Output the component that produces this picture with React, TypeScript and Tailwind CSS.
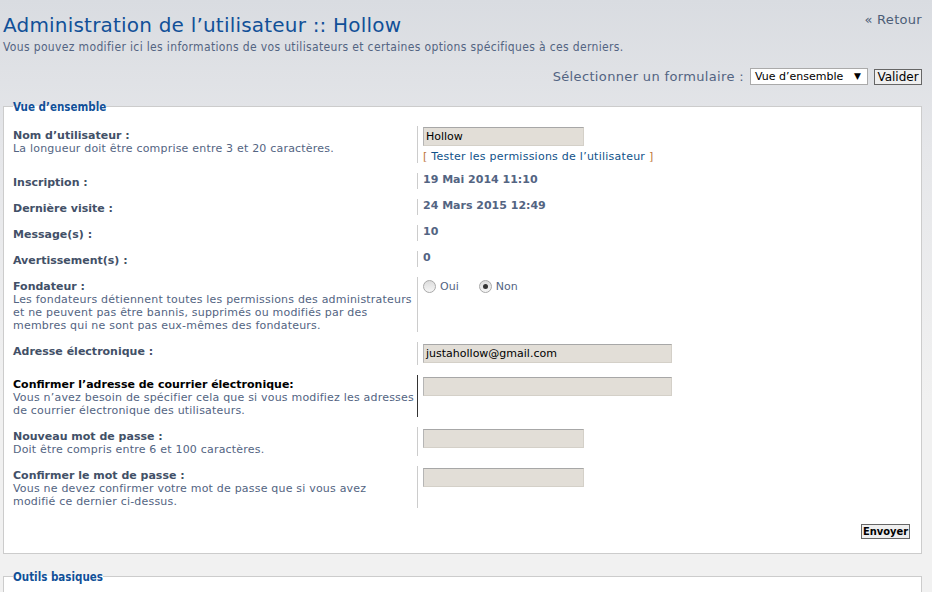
import React from "react";

const V = { fontFamily: '"DejaVu Sans", Verdana, sans-serif' };
const T = { fontFamily: '"DejaVu Sans Condensed", "DejaVu Sans", Tahoma, sans-serif' };

function Row({
  label,
  explain,
  children,
  dark,
  black,
}: {
  label: string;
  explain?: React.ReactNode;
  children?: React.ReactNode;
  dark?: boolean;
  black?: boolean;
}) {
  return (
    <div className="flex mb-[10px]">
      <div className="w-[404px] shrink-0 pt-[3px] text-[11px] leading-[13px] whitespace-nowrap" style={V}>
        <div className={`font-bold text-[11px] leading-[13px] ${black ? "text-black" : "text-[#425067]"}`}>{label}</div>
        {explain && <div className="text-[11px] text-[#536482] tracking-[0.2px]">{explain}</div>}
      </div>
      <div className={`flex-1 border-l pl-[5px] ${dark ? "border-[#333]" : "border-[#ccc]"}`}>{children}</div>
    </div>
  );
}

function Input({ value, w }: { value?: string; w: string }) {
  return (
    <div
      className={`${w} h-[19px] bg-[#e2ded7] border border-t-[#a7a7a7] border-l-[#b5b5b5] border-r-[#d4d0c8] border-b-[#d4d0c8] text-[11px] leading-[17px] px-[2px] text-black`}
      style={V}
    >
      {value}
    </div>
  );
}

function Value({ v }: { v: string }) {
  return (
    <div className="font-bold text-[11px] leading-[13px] text-[#536482]" style={V}>
      {v}
    </div>
  );
}

function Radio({ checked }: { checked?: boolean }) {
  return (
    <span className="inline-flex w-[13px] h-[13px] rounded-full border border-[#a9a9a9] bg-[linear-gradient(to_bottom,#dcdcdc,#f6f6f6)] items-center justify-center">
      {checked && <span className="w-[5px] h-[5px] rounded-full bg-[#333]" />}
    </span>
  );
}

export default function App() {
  return (
    <div className="min-h-[592px] bg-[linear-gradient(to_bottom,#d9dce1_0px,#e6e7ea_150px,#f1f1f1_400px)] pl-[3px] pr-[10px] pt-[12px]" style={V}>
      <div className="flex justify-between items-start">
        <h1 className="text-[20px] leading-[26px] text-[#115098] tracking-[0.2px]" style={V}>
          Administration de l’utilisateur :: Hollow
        </h1>
        <a className="text-[13px] leading-[20px] text-[#4c5d77] mt-[-2px] tracking-[0.3px]" style={V}>« Retour</a>
      </div>
      <p className="text-[12px] leading-[16px] text-[#536482] mt-[1px] tracking-[0.35px]" style={T}>
        Vous pouvez modifier ici les informations de vos utilisateurs et certaines options spécifiques à ces derniers.
      </p>
      <div className="flex justify-end items-center mt-[12px] gap-[6px]">
        <span className="text-[13px] text-[#536482] tracking-[0.35px]" style={V}>Sélectionner un formulaire :</span>
        <div className="w-[118px] h-[17px] bg-white border border-[#aaa] flex items-center justify-between pl-[4px] pr-[6px] text-[11px] text-black" style={V}>
          <span>Vue d’ensemble</span>
          <span className="text-[9px]">▼</span>
        </div>
        <div className="h-[16px] w-[48px] text-center border border-[#666] bg-[#efefef] text-[12px] leading-[14px] text-black" style={V}>Valider</div>
      </div>

      <fieldset className="mt-[13px] border border-[#ccc] bg-white pl-[9px] pr-[11px] pt-[12px] pb-[14px]">
        <legend className="text-[11.5px] font-bold text-[#115098] leading-[14px] px-0" style={T}>Vue d’ensemble</legend>
        <Row label="Nom d’utilisateur :" explain="La longueur doit être comprise entre 3 et 20 caractères.">
          <div className="pt-[1px]">
            <Input value="Hollow" w="w-[161px]" />
            <div className="mt-[4px] text-[11px] leading-[13px] tracking-[0.25px]" style={V}>
              <span className="text-[#c0763a]">[ </span>
              <span className="text-[#105289]">Tester les permissions de l’utilisateur</span>
              <span className="text-[#c0763a]"> ]</span>
            </div>
          </div>
        </Row>
        <Row label="Inscription :"><Value v="19 Mai 2014 11:10" /></Row>
        <Row label="Dernière visite :"><Value v="24 Mars 2015 12:49" /></Row>
        <Row label="Message(s) :"><Value v="10" /></Row>
        <Row label="Avertissement(s) :"><Value v="0" /></Row>
        <Row
          label="Fondateur :"
          explain={
            <>
              Les fondateurs détiennent toutes les permissions des administrateurs
              <br />
              et ne peuvent pas être bannis, supprimés ou modifiés par des
              <br />
              membres qui ne sont pas eux-mêmes des fondateurs.
            </>
          }
        >
          <div className="flex items-center pt-[3px] text-[11px] leading-[13px] text-[#536482]" style={V}>
            <Radio />
            <span className="ml-[4px] mr-[20px]">Oui</span>
            <Radio checked />
            <span className="ml-[4px]">Non</span>
          </div>
        </Row>
        <Row label="Adresse électronique :">
          <div className="py-[2px]">
            <Input value="justahollow@gmail.com" w="w-[249px]" />
          </div>
        </Row>
        <Row
          black
          dark
          label="Confirmer l’adresse de courrier électronique:"
          explain={
            <>
              Vous n’avez besoin de spécifier cela que si vous modifiez les adresses
              <br />
              de courrier électronique des utilisateurs.
            </>
          }
        >
          <div className="pt-[2px]">
            <Input w="w-[249px]" />
          </div>
        </Row>
        <Row label="Nouveau mot de passe :" explain="Doit être compris entre 6 et 100 caractères.">
          <div className="pt-[2px]">
            <Input w="w-[161px]" />
          </div>
        </Row>
        <Row
          label="Confirmer le mot de passe :"
          explain={
            <>
              Vous ne devez confirmer votre mot de passe que si vous avez
              <br />
              modifié ce dernier ci-dessus.
            </>
          }
        >
          <div className="pt-[2px]">
            <Input w="w-[161px]" />
          </div>
        </Row>
        <div className="flex justify-end mt-[16px]">
          <div className="h-[15px] w-[49px] text-center border border-[#666] bg-[#efefef] text-[11px] leading-[13px] font-bold text-black" style={T}>
            Envoyer
          </div>
        </div>
      </fieldset>

      <fieldset className="mt-[16px] border border-[#ccc] bg-white pl-[9px] pr-[11px] pt-[10px] pb-[14px] h-[40px]">
        <legend className="text-[11.5px] font-bold text-[#115098] leading-[14px] px-0" style={T}>Outils basiques</legend>
      </fieldset>
    </div>
  );
}
